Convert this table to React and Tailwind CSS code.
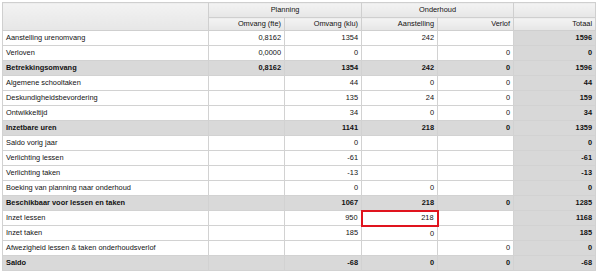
const rows = [
  { label: "Aanstelling urenomvang", fte: "0,8162", klu: "1354", aan: "242", verlof: "", tot: "1596" },
  { label: "Verloven", fte: "0,0000", klu: "0", aan: "", verlof: "0", tot: "0" },
  { label: "Betrekkingsomvang", fte: "0,8162", klu: "1354", aan: "242", verlof: "0", tot: "1596", sum: true },
  { label: "Algemene schooltaken", fte: "", klu: "44", aan: "0", verlof: "0", tot: "44" },
  { label: "Deskundigheidsbevordering", fte: "", klu: "135", aan: "24", verlof: "0", tot: "159" },
  { label: "Ontwikkeltijd", fte: "", klu: "34", aan: "0", verlof: "0", tot: "34" },
  { label: "Inzetbare uren", fte: "", klu: "1141", aan: "218", verlof: "0", tot: "1359", sum: true },
  { label: "Saldo vorig jaar", fte: "", klu: "0", aan: "", verlof: "", tot: "0" },
  { label: "Verlichting lessen", fte: "", klu: "-61", aan: "", verlof: "", tot: "-61" },
  { label: "Verlichting taken", fte: "", klu: "-13", aan: "", verlof: "", tot: "-13" },
  { label: "Boeking van planning naar onderhoud", fte: "", klu: "0", aan: "0", verlof: "", tot: "0" },
  { label: "Beschikbaar voor lessen en taken", fte: "", klu: "1067", aan: "218", verlof: "0", tot: "1285", sum: true },
  { label: "Inzet lessen", fte: "", klu: "950", aan: "218", verlof: "", tot: "1168", active: true },
  { label: "Inzet taken", fte: "", klu: "185", aan: "0", verlof: "", tot: "185" },
  { label: "Afwezigheid lessen & taken onderhoudsverlof", fte: "", klu: "", aan: "", verlof: "0", tot: "0" },
  { label: "Saldo", fte: "", klu: "-68", aan: "0", verlof: "0", tot: "-68", sum: true },
];

const head = "border border-[#cfcfcf] bg-gradient-to-b from-[#f3f3f3] to-[#e6e6e6] font-normal";

export default function App() {
  return (
    <div className="w-[597px] h-[273px] bg-white pt-[2px] pl-[2px] font-['Liberation_Sans',Arial,sans-serif] text-[7.4px] text-[#111]">
      <table className="table-fixed border-collapse w-[593px] border border-[#b4b4b4]">
        <colgroup>
          <col className="w-[206px]" />
          <col className="w-[76px]" />
          <col className="w-[77px]" />
          <col className="w-[76px]" />
          <col className="w-[76px]" />
          <col className="w-[82px]" />
        </colgroup>
        <thead>
          <tr className="h-[15px]">
            <th rowSpan={2} className={head}></th>
            <th colSpan={2} className={`${head} text-center`}>Planning</th>
            <th colSpan={2} className={`${head} text-center`}>Onderhoud</th>
            <th className={head}></th>
          </tr>
          <tr className="h-[13px]">
            <th className={`${head} text-right pr-[3px]`}>Omvang (fte)</th>
            <th className={`${head} text-right pr-[3px]`}>Omvang (klu)</th>
            <th className={`${head} text-right pr-[3px]`}>Aanstelling</th>
            <th className={`${head} text-right pr-[3px]`}>Verlof</th>
            <th className={`${head} text-right pr-[3px]`}>Totaal</th>
          </tr>
        </thead>
        <tbody>
          {rows.map((r) => {
            const base = r.sum ? "bg-[#d9d9d9] font-bold" : "bg-white";
            const cell = `border border-[#d2d2d2] h-[15px] p-0 ${base}`;
            return (
              <tr key={r.label} className="h-[15px]">
                <td className={`${cell} text-left pl-[3px] whitespace-nowrap`}>{r.label}</td>
                <td className={`${cell} text-right pr-[3px]`}>{r.fte}</td>
                <td className={`${cell} text-right pr-[3px]`}>{r.klu}</td>
                <td
                  className={
                    r.active
                      ? "border-2 border-[#e0141e] h-[15px] p-0 bg-white text-right pr-[3px]"
                      : `${cell} text-right pr-[3px]`
                  }
                >
                  {r.aan}
                </td>
                <td className={`${cell} text-right pr-[3px]`}>{r.verlof}</td>
                <td className="border border-[#d2d2d2] h-[15px] p-0 bg-[#d8d8d8] font-bold text-right pr-[3px]">
                  {r.tot}
                </td>
              </tr>
            );
          })}
        </tbody>
      </table>
    </div>
  );
}
